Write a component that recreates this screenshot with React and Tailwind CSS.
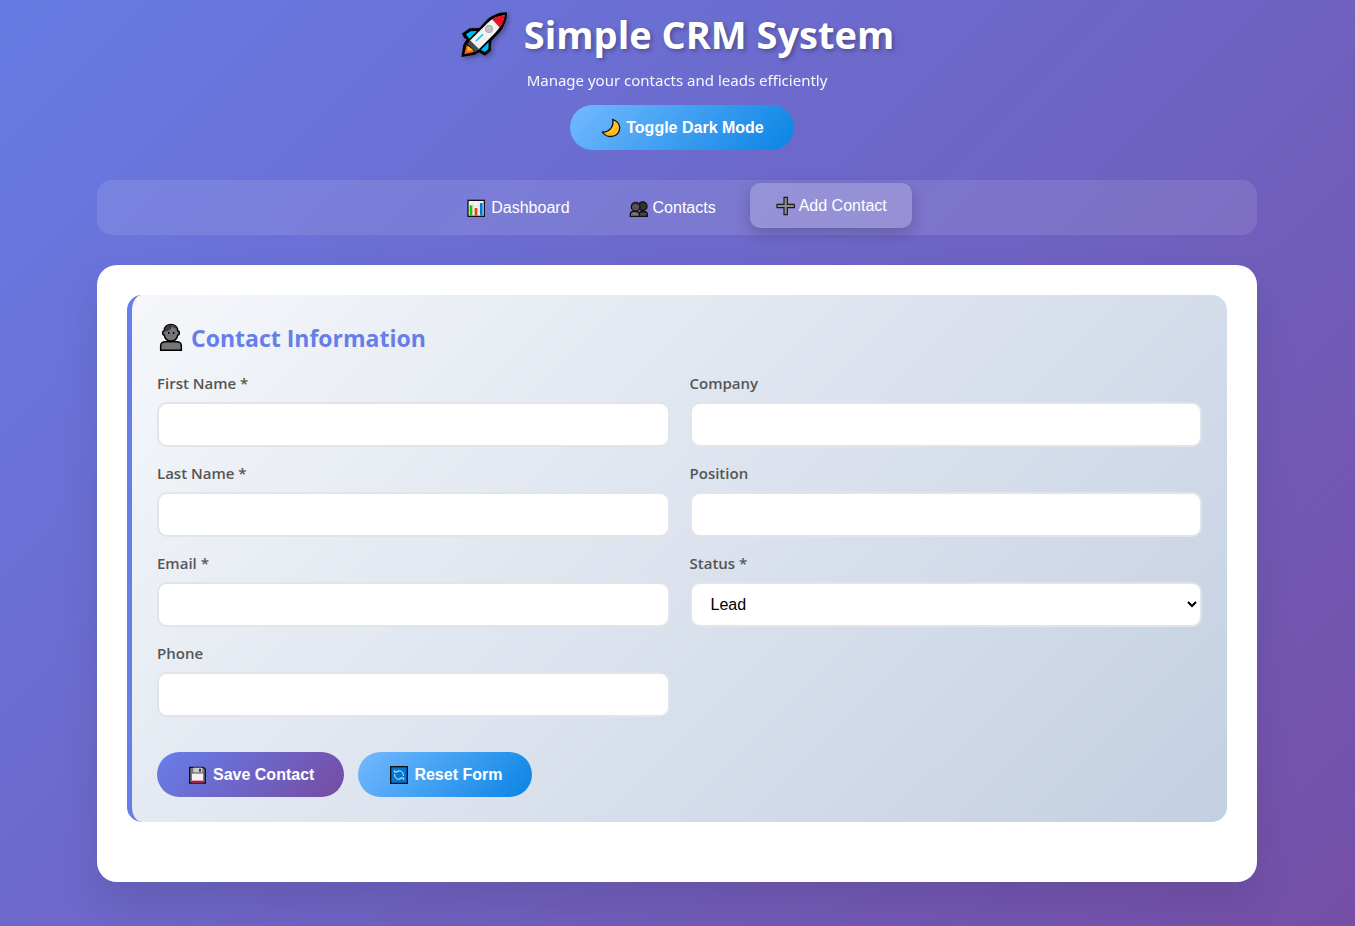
import { useState } from "react";

const ui = "font-['Liberation_Sans',Arial,sans-serif]";

function Rocket() {
  return (
    <svg viewBox="18 15 144 144" className="size-12 shrink-0 drop-shadow-[2px_2px_2px_rgba(0,0,0,0.3)]" aria-hidden="true">
      <path d="M159 22 C137 21 111 31 93 50 L76 69 L47 70 L23 86 L31 99 L38 103 L28 119 L22 156 L62 149 L75 142 L93 152 L110 137 L112 107 L131 88 C149 70 159 46 159 22Z" fill="#000" />
      <path d="M152 31 C132 33 114 41 100 55 L47 107 L73 134 L124 83 C140 67 149 49 152 31Z" fill="#f2f2f2" />
      <path d="M152 31 C138 32 125 36 114 43 L138 68 C146 56 151 43 152 31Z" fill="#e81224" />
      <path d="M50 79 L69 78 L46 101 L36 88Z M104 112 L103 132 L93 141 L80 135Z" fill="#00bcf2" />
      <path d="M48 106 L40 116 L65 141 L75 132Z" fill="#454b4e" />
      <path d="M38 119 L31 148 L51 143 L62 140Z" fill="#f7630c" />
      <path d="M42 123 L40 139 L50 137 L57 134Z" fill="#ffb636" />
      <path d="M66 108 L87 88" stroke="#00bcf2" strokeWidth="4" />
      <circle cx="105" cy="72" r="11" fill="#c4c4c4" stroke="#aaa" strokeWidth="3" />
    </svg>
  );
}

function Moon() {
  return (
    <svg viewBox="120 67 66 66" className="size-5.5 shrink-0" aria-hidden="true">
      <path d="M158 74 C174 80 182 93 178 107 C172 128 141 133 127 112 C145 114 163 98 158 74Z" fill="#ffc328" stroke="#111" strokeWidth="4" strokeLinejoin="round" />
      <path d="M134 116 C149 123 166 117 171 99" fill="none" stroke="#efa91b" strokeWidth="3" />
    </svg>
  );
}

function BarChart() {
  return (
    <svg viewBox="51 69 60 60" className="size-5 shrink-0" aria-hidden="true">
      <rect x="54" y="76" width="49" height="48" fill="#f2f2f2" stroke="#111" strokeWidth="4" />
      <path d="M70 79 V122 M87 79 V122 M57 93 H101 M57 108 H101" stroke="#ddd" strokeWidth="2" />
      <path d="M59 91h8v31h-8z" fill="#16c60c" />
      <path d="M74 99h8v23h-8z" fill="#f03a17" />
      <path d="M90 84h8v38h-8z" fill="#0078d7" />
    </svg>
  );
}

function People() {
  return (
    <svg viewBox="55 69 60 60" className="size-5 shrink-0" aria-hidden="true">
      <circle cx="96" cy="94" r="13" fill="#333" stroke="#111" strokeWidth="4" />
      <path d="M85 124 V117 C86 107 109 107 110 117 V124Z" fill="#454545" stroke="#111" strokeWidth="4" />
      <path d="M59 124 V117 C60 106 84 106 86 117 V124Z" fill="#767676" stroke="#111" strokeWidth="4" />
      <circle cx="75" cy="95" r="13" fill="#5c5c5c" stroke="#111" strokeWidth="4" />
      <path d="M64 93 C65 79 85 79 86 93 C80 91 77 89 74 86 C71 90 68 92 64 93Z" fill="#333" />
      <path d="M71 97v4 M79 97v4" stroke="#222" strokeWidth="2" />
    </svg>
  );
}

function Plus() {
  return (
    <svg viewBox="495 64 60 60" className="size-5 shrink-0" aria-hidden="true">
      <path d="M522 68h10v21h21v10h-21v21h-10v-21h-21v-10h21z" fill="#8d8d8d" stroke="#1b1b1b" strokeWidth="3.5" />
    </svg>
  );
}

function Person() {
  return (
    <svg viewBox="111 114 84 90" className="h-7.5 w-7 shrink-0" aria-hidden="true">
      <path d="M122 196 V182 C122 174 129 170 137 170 H169 C178 170 184 175 184 182 V196Z" fill="#767676" stroke="#000" strokeWidth="4.5" />
      <path d="M133 137 C131 112 174 112 173 137 C180 139 180 149 173 151 C169 174 137 174 133 151 C126 149 126 139 133 137Z" fill="#767676" stroke="#000" strokeWidth="4.5" />
      <path d="M134 140 C131 114 169 113 171 132 C164 131 160 127 157 124 C153 134 145 138 134 140Z" fill="#3b3b3b" />
      <path d="M146 141v6 M161 141v6" stroke="#000" strokeWidth="4" />
    </svg>
  );
}

function Floppy() {
  return (
    <svg viewBox="111 73 66 66" className="size-5.5 shrink-0" aria-hidden="true">
      <path d="M119 83 H160 L166 89 V130 H119Z" fill="#767676" stroke="#111" strokeWidth="4" />
      <path d="M130 84h27v14h-27z" fill="#ccc" />
      <path d="M147 87h6v9h-6z" fill="#444" />
      <path d="M126 102h33v26h-33z" fill="#f2f2f2" />
      <path d="M126 123h33v6h-33z" fill="#c30052" />
    </svg>
  );
}

function Refresh() {
  return (
    <svg viewBox="714 73 66 66" className="size-5.5 shrink-0" aria-hidden="true">
      <rect x="722" y="81" width="50" height="50" fill="#0078d7" stroke="#111" strokeWidth="4" />
      <g fill="none" stroke="#f2f2f2" strokeWidth="3">
        <path d="M740 96 C750 90 761 96 760 109" />
        <path d="M754 116 C744 122 733 116 734 103" />
        <path d="M733 92 V97 H742" />
        <path d="M761 120 V115 H752" />
      </g>
    </svg>
  );
}

const tabs = [
  { id: "dashboard", label: "Dashboard", Icon: BarChart },
  { id: "contacts", label: "Contacts", Icon: People },
  { id: "add", label: "Add Contact", Icon: Plus },
];

function Pill({ type = "button", tone, Icon, children, onClick }) {
  const tones = {
    blue: "from-[#74b9ff] to-[#0984e3]",
    purple: "from-[#667eea] to-[#764ba2]",
  };
  return (
    <button
      type={type}
      onClick={onClick}
      className={`flex cursor-pointer items-center gap-1 rounded-full bg-linear-[135deg] px-[30px] pt-3 pb-[11px] text-base leading-[22px] font-bold text-white ${ui} ${tones[tone]}`}
    >
      <Icon />
      {children}
    </button>
  );
}

const control = `h-[45px] w-full rounded-[10px] border-2 border-[#e1e5e9] bg-white px-[15px] text-base text-black outline-none focus:border-[#667eea] ${ui}`;

function Field({ id, label, children, type = "text", required }) {
  return (
    <div>
      <label htmlFor={id} className="mb-2 block text-[15px] leading-[22px] font-semibold text-[#555]">
        {label}
      </label>
      {children || <input id={id} name={id} type={type} required={required} className={control} />}
    </div>
  );
}

export default function App() {
  const [tab, setTab] = useState("add");
  const [dark, setDark] = useState(false);
  return (
    <div
      className={`min-h-screen bg-linear-[135deg] pr-5 pb-11 pl-[19px] font-['Open_Sans','Noto_Sans',sans-serif] ${
        dark ? "from-[#2d3436] to-[#000000]" : "from-[#677be4] to-[#754fa7]"
      }`}
    >
      <div className="mx-auto max-w-[1160px]">
        <header className="flex flex-col items-center pt-[7px] text-white">
          <h1 className="flex items-center gap-4 text-[38px] leading-[54px] font-bold [text-shadow:2px_2px_4px_rgba(0,0,0,0.3)]">
            <Rocket />
            Simple CRM System
          </h1>
          <p className="mt-2 mb-3.5 font-['Noto_Sans',sans-serif] text-[15px] leading-[22px] opacity-95">
            Manage your contacts and leads efficiently
          </p>
          <div className="pl-2.5">
            <Pill tone="blue" Icon={Moon} onClick={() => setDark(!dark)}>
              Toggle Dark Mode
            </Pill>
          </div>
        </header>

        <nav className="mt-[30px] flex justify-center gap-[9px] rounded-[15px] bg-white/10 p-[5px]">
          {tabs.map(({ id, label, Icon }) => (
            <button
              key={id}
              type="button"
              onClick={() => setTab(id)}
              className={`flex cursor-pointer items-center gap-1 rounded-[10px] px-[25px] pt-3 pb-[11px] text-base leading-[22px] text-white ${ui} ${
                tab === id ? "-translate-y-0.5 bg-white/20 shadow-[0_5px_15px_rgba(0,0,0,0.2)]" : ""
              }`}
            >
              <Icon />
              {label}
            </button>
          ))}
        </nav>

        <main className="mt-[30px] rounded-[20px] bg-white px-[30px] pt-[30px] pb-[60px] shadow-[0_20px_40px_rgba(0,0,0,0.1)]">
          <form
            className="rounded-[15px] border-l-[5px] border-[#667eea] bg-linear-[135deg] from-[#f5f7fa] to-[#c3cfe2] p-[25px]"
            onSubmit={(e) => e.preventDefault()}
          >
            <h2 className="mb-4 flex items-center gap-1.5 text-[23px] leading-9 font-bold text-[#667eea]">
              <Person />
              Contact Information
            </h2>
            <div className="grid grid-cols-2 gap-5">
              <div className="flex flex-col gap-[15px]">
                <Field id="firstName" label="First Name *" required />
                <Field id="lastName" label="Last Name *" required />
                <Field id="email" label="Email *" type="email" required />
                <Field id="phone" label="Phone" type="tel" />
              </div>
              <div className="flex flex-col gap-[15px]">
                <Field id="company" label="Company" />
                <Field id="position" label="Position" />
                <Field id="status" label="Status *">
                  <select id="status" name="status" required className={control}>
                    <option>Lead</option>
                    <option>Prospect</option>
                    <option>Customer</option>
                  </select>
                </Field>
              </div>
            </div>
            <div className="mt-[35px] flex gap-3.5">
              <Pill type="submit" tone="purple" Icon={Floppy}>
                Save Contact
              </Pill>
              <Pill type="reset" tone="blue" Icon={Refresh}>
                Reset Form
              </Pill>
            </div>
          </form>
        </main>
      </div>
    </div>
  );
}
